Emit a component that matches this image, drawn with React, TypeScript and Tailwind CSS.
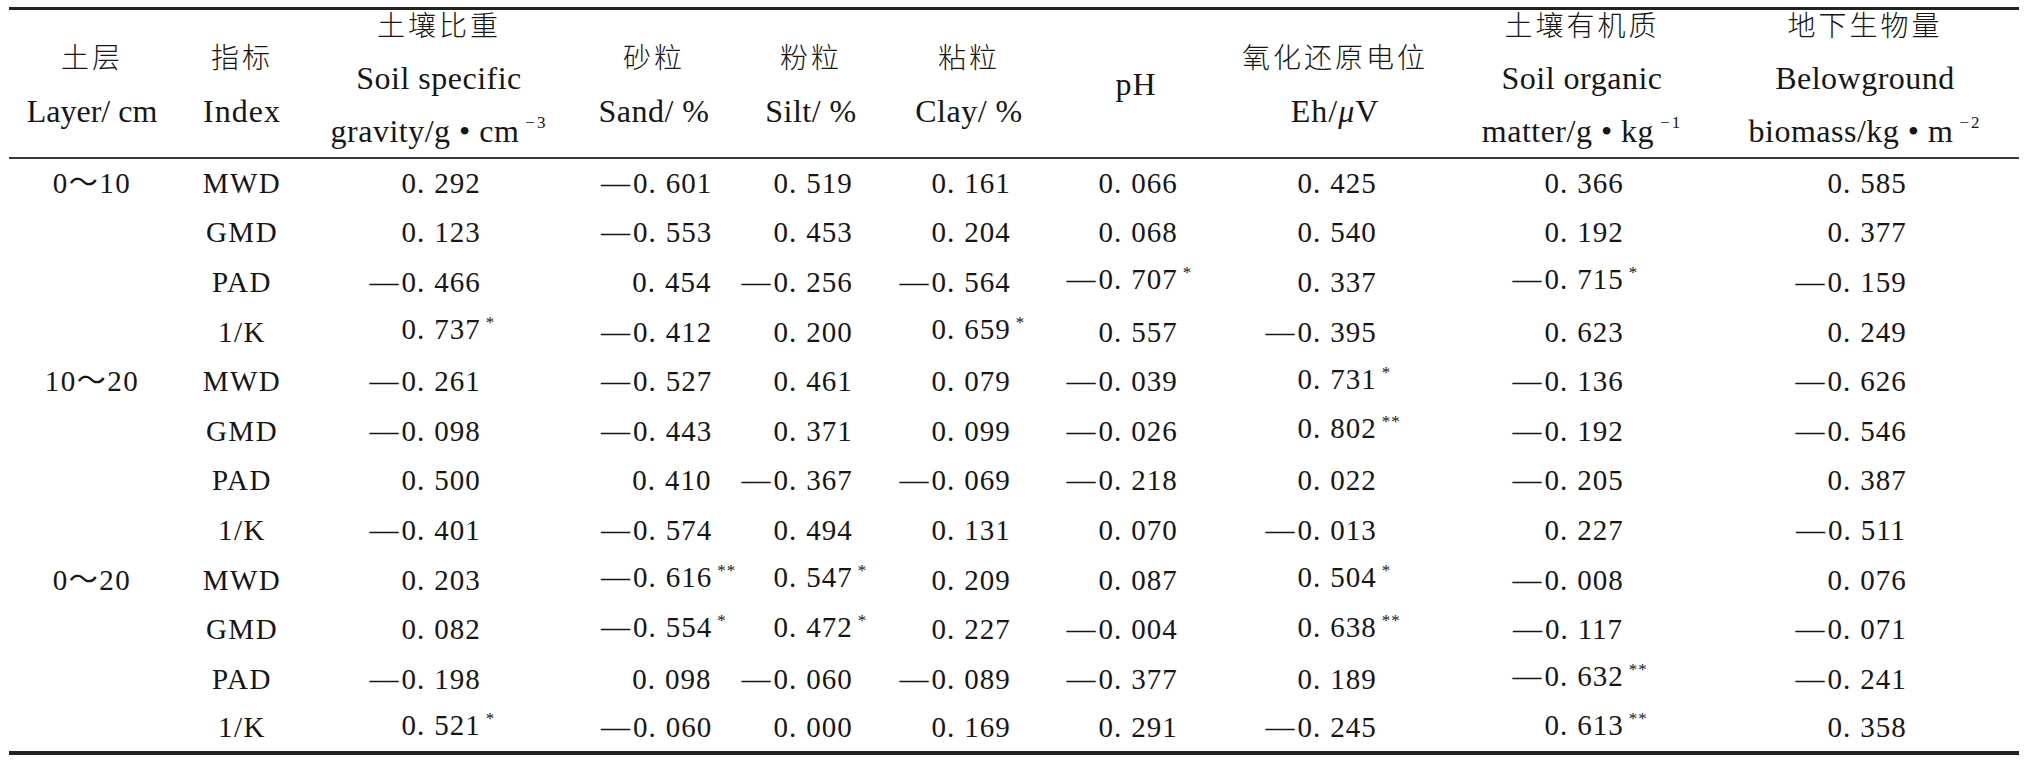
import React from 'react';

// Table: correlation between aggregate indices and soil properties
type Cell = string;

const rows: Cell[][] = [
    ['0～10', 'MWD', '0.292', '-0.601', '0.519', '0.161', '0.066', '0.425', '0.366', '0.585'],
    ['', 'GMD', '0.123', '-0.553', '0.453', '0.204', '0.068', '0.540', '0.192', '0.377'],
    ['', 'PAD', '-0.466', '0.454', '-0.256', '-0.564', '-0.707*', '0.337', '-0.715*', '-0.159'],
    ['', '1/K', '0.737*', '-0.412', '0.200', '0.659*', '0.557', '-0.395', '0.623', '0.249'],
    ['10～20', 'MWD', '-0.261', '-0.527', '0.461', '0.079', '-0.039', '0.731*', '-0.136', '-0.626'],
    ['', 'GMD', '-0.098', '-0.443', '0.371', '0.099', '-0.026', '0.802**', '-0.192', '-0.546'],
    ['', 'PAD', '0.500', '0.410', '-0.367', '-0.069', '-0.218', '0.022', '-0.205', '0.387'],
    ['', '1/K', '-0.401', '-0.574', '0.494', '0.131', '0.070', '-0.013', '0.227', '-0.511'],
    ['0～20', 'MWD', '0.203', '-0.616**', '0.547*', '0.209', '0.087', '0.504*', '-0.008', '0.076'],
    ['', 'GMD', '0.082', '-0.554*', '0.472*', '0.227', '-0.004', '0.638**', '-0.117', '-0.071'],
    ['', 'PAD', '-0.198', '0.098', '-0.060', '-0.089', '-0.377', '0.189', '-0.632**', '-0.241'],
    ['', '1/K', '0.521*', '-0.060', '0.000', '0.169', '0.291', '-0.245', '0.613**', '0.358'],
];

const colWidths = ['w-[166px]', 'w-[134px]', 'w-[260px]', 'w-[170px]', 'w-[144px]', 'w-[172px]', 'w-[162px]', 'w-[236px]', 'w-[258px]', 'w-[308px]'];

const Zh: React.FC<{ children: React.ReactNode }> = ({ children }) => (
    <span className="font-['Noto_Sans_CJK_SC',sans-serif] font-light tracking-[3px] text-[28px]">{children}</span>
);

const Sup: React.FC<{ children: React.ReactNode }> = ({ children }) => (
    <span className="relative -top-[14px] ml-[6px] text-[17px] tracking-[2px]">{children}</span>
);

// number with hanging minus dash and significance stars
const Num: React.FC<{ value: string }> = ({ value }) => {
    const neg = value.startsWith('-');
    const stars = value.match(/\*+$/)?.[0] ?? '';
    const body = value.replace(/^-/, '').replace(/\*+$/, '');
    const [int, dec] = body.split('.');
    return (
        <div className="flex justify-center items-baseline">
            <span className="w-[31px] text-right tracking-normal">{neg ? '—' : '\u00a0'}</span>
            <span className="ml-[3px] tracking-[1px]">
                {int}<span className="mr-[9px]">.</span>{dec}
            </span>
            <span className="w-[30px] text-left">
                {stars && <span className="relative -top-[11px] ml-[5px] text-[17px] tracking-[1px]">{stars}</span>}
            </span>
        </div>
    );
};

const HeadCell: React.FC<{ lines: React.ReactNode[]; width: string }> = ({ lines, width }) => (
    <th className={`${width} p-0 align-top font-normal`}>
        <div className={`h-[147px] flex flex-col items-center justify-center ${lines.length === 3 ? 'leading-[53px] pb-[6px]' : 'leading-[54px]'}`}>
            {lines.map((l, i) => (
                <div key={i} className="whitespace-nowrap">{l}</div>
            ))}
        </div>
    </th>
);

export default function App() {
    const headers: React.ReactNode[][] = [
        [<Zh>土层</Zh>, <span>Layer/ cm</span>],
        [<Zh>指标</Zh>, <span className="tracking-[1px]">Index</span>],
        [<Zh>土壤比重</Zh>, <span className="tracking-[0.5px]">Soil specific</span>, <span className="tracking-[0.5px]">gravity/g • cm<Sup>−3</Sup></span>],
        [<Zh>砂粒</Zh>, <span className="tracking-[0.5px]">Sand/ %</span>],
        [<Zh>粉粒</Zh>, <span className="tracking-[0.5px]">Silt/ %</span>],
        [<Zh>粘粒</Zh>, <span className="tracking-[0.5px]">Clay/ %</span>],
        [<span className="tracking-[1px]">pH</span>],
        [<Zh>氧化还原电位</Zh>, <span className="tracking-[1px]">Eh/<i>μ</i>V</span>],
        [<Zh>土壤有机质</Zh>, <span className="tracking-[0.5px]">Soil organic</span>, <span className="tracking-[0.5px]">matter/g • kg<Sup>−1</Sup></span>],
        [<Zh>地下生物量</Zh>, <span className="tracking-[0.5px]">Belowground</span>, <span className="tracking-[0.5px]">biomass/kg • m<Sup>−2</Sup></span>],
    ];

    return (
        <div className="w-[2032px] h-[768px] bg-white pt-[7px] pl-[9px] font-['Liberation_Serif','Noto_Sans_CJK_SC',serif] text-[#161616]">
            <table className="table-fixed border-collapse w-[2010px] border-t-[3px] border-b-[4px] border-[#222]">
                <thead className="text-[32px]">
                    <tr className="border-b-2 border-[#3a3a3a]">
                        {headers.map((h, i) => (
                            <HeadCell key={i} lines={h} width={colWidths[i]} />
                        ))}
                    </tr>
                </thead>
                <tbody className="text-[29px] leading-[36px]">
                    {rows.map((r, ri) => (
                        <tr key={ri} className="h-[49.6px]">
                            {r.map((c, ci) => (
                                <td key={ci} className={`p-0 text-center align-middle whitespace-nowrap ${ci === 3 ? 'pl-[32px]' : ''}`}>
                                    {ci < 2 ? <span className="tracking-[1.5px]">{c}</span> : <Num value={c} />}
                                </td>
                            ))}
                        </tr>
                    ))}
                </tbody>
            </table>
        </div>
    );
}
